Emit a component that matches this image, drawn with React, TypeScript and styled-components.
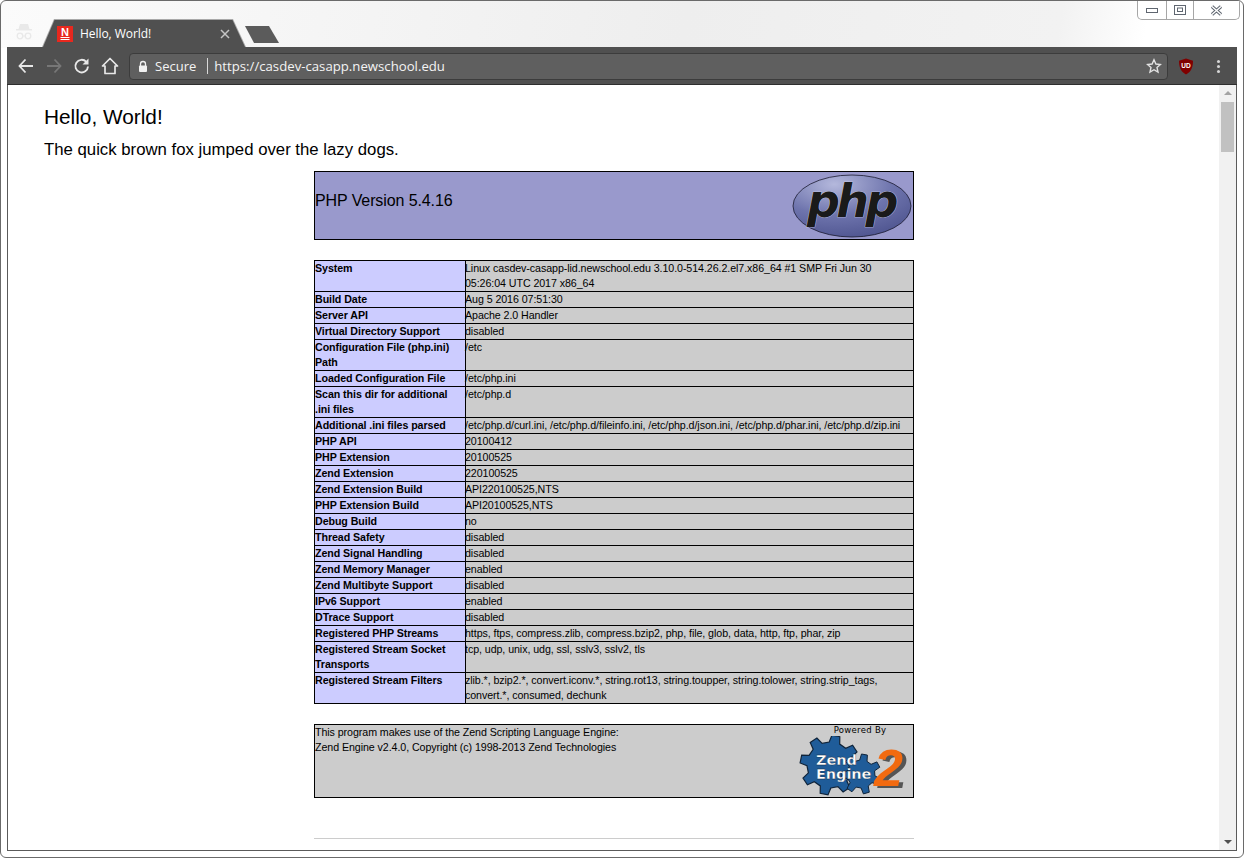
import React from 'react'
import styled, { createGlobalStyle } from 'styled-components'

const GlobalStyle = createGlobalStyle`
  html, body {
    margin: 0;
    padding: 0;
    height: 100%;
    overflow: hidden;
    background: #fff;
  }
  #root {
    height: 100%;
  }
`

const Frame = styled.div`
  box-sizing: border-box;
  width: 1244px;
  height: 858px;
  display: flex;
  flex-direction: column;
  border: 1px solid #6a6a6a;
  border-radius: 6px 6px 6px 6px;
  padding: 0 6px 6px 6px;
  background: linear-gradient(100deg, #fbfbfb 0%, #f4f4f4 30%, #eeeeee 55%, #f2f2f2 85%, #ffffff 92%);
  background-size: 100% 47px;
  background-repeat: no-repeat;
  background-color: #fff;
  overflow: hidden;
`

const TitleBar = styled.div`
  height: 46px;
  flex: none;
  display: flex;
  align-items: flex-end;
  margin-right: -3px;
`

const Incognito = styled.svg`
  width: 18px;
  height: 17px;
  margin: 0 0 7px 8px;
  flex: none;
`

const TabEdge = styled.div`
  width: 204px;
  height: 28px;
  margin-left: 9px;
  flex: none;
  background: #a9a9a9;
  clip-path: polygon(12px 0, 191px 0, 204px 28px, 0 28px);
`

const Tab = styled.div`
  height: 28px;
  box-sizing: border-box;
  display: flex;
  align-items: center;
  padding: 1px 0 0 15px;
  background: #505050;
  clip-path: polygon(12.5px 1px, 190.5px 1px, 203px 28px, 1px 28px);
  font-family: "Open Sans", "Noto Sans", sans-serif;
  font-size: 12px;
  letter-spacing: -0.05px;
  color: #fff;
`

const TabTitle = styled.span`
  margin-left: 7px;
  flex: 1;
`

const TabClose = styled.svg`
  width: 10px;
  height: 10px;
  margin-right: 16px;
`

const NewTab = styled.div`
  width: 34px;
  height: 17px;
  margin: 0 0 4px -1px;
  flex: none;
  background: #5b5b5b;
  clip-path: polygon(0 0, 24px 0, 34px 17px, 9px 17px);
`

const WindowControls = styled.div`
  align-self: flex-start;
  margin-left: auto;
  display: flex;
  height: 19px;
  box-sizing: border-box;
  border: 1px solid #a6a6a6;
  border-top: none;
  border-radius: 0 0 5px 5px;
  background: #fff;
`

const WindowButton = styled.div<{ $w: number }>`
  width: ${props => props.$w}px;
  display: flex;
  align-items: center;
  justify-content: center;
  box-sizing: border-box;
  & + & {
    border-left: 1px solid #a6a6a6;
  }
`

const Toolbar = styled.div`
  height: 38px;
  flex: none;
  display: flex;
  align-items: center;
  background: #505050;
  box-sizing: border-box;
  padding: 1px 0 0 9px;
  border-bottom: 1px solid #2e2e2e;
`

const NavIcon = styled.svg<{ $ml?: number }>`
  width: 20px;
  height: 20px;
  flex: none;
  margin-left: ${props => props.$ml ?? 0}px;
`

const Omnibox = styled.div`
  width: 1039px;
  height: 27px;
  box-sizing: border-box;
  margin-left: 9px;
  display: flex;
  align-items: center;
  background: #5f5f5f;
  border: 1px solid #3c3c3c;
  border-radius: 4px;
  padding-left: 7px;
  font-family: "Open Sans", "Noto Sans", sans-serif;
  color: #f4f4f4;
`

const Secure = styled.span`
  margin-left: 6px;
  font-size: 13px;
`

const UrlDivider = styled.span`
  width: 1px;
  height: 16px;
  margin: 0 6px 0 11px;
  background: #d8d8d8;
`

const Url = styled.span`
  font-size: 13.2px;
  flex: 1;
`

const Dots = styled.div`
  margin-left: 23px;
  display: flex;
  flex-direction: column;
  gap: 2px;
  span {
    width: 3px;
    height: 3px;
    border-radius: 50%;
    background: #d6d6d6;
  }
`

const Viewport = styled.div`
  flex: 1;
  min-height: 0;
  display: flex;
  border: 1px solid #5a5a5a;
  border-top: none;
  background: #fff;
`

const Page = styled.div`
  flex: 1;
  min-width: 0;
  overflow: hidden;
  padding: 0 36px;
  font-family: "Liberation Sans", Arial, sans-serif;
  color: #000;
`

const Heading = styled.h1`
  margin: 19px 0 0;
  font-size: 20.8px;
  font-weight: 400;
  line-height: 26px;
`

const Lead = styled.p`
  margin: 10px 0 11px;
  font-size: 16.75px;
  line-height: 20px;
`

const Center = styled.div`
  width: 600px;
  margin: 0 auto;
  position: relative;
  left: 0.5px;
`

const VersionBox = styled.div`
  box-sizing: border-box;
  height: 69px;
  display: flex;
  align-items: flex-start;
  justify-content: space-between;
  border: 1px solid #000;
  background: #9999cc;
  font-size: 16px;
  letter-spacing: -0.1px;
  line-height: 20px;
  padding: 19px 1px 0 0;
`

const PhpLogo = styled.svg`
  width: 120px;
  height: 64px;
  margin-top: -17px;
`

const InfoTable = styled.table`
  width: 600px;
  margin: 20px 0 20px;
  border-collapse: collapse;
  table-layout: fixed;
  font-size: 10.67px;
  letter-spacing: -0.07px;
  line-height: 15px;
`

const Key = styled.td`
  width: 150px;
  padding: 0;
  border: 1px solid #000;
  background: #ccccff;
  font-weight: 700;
  vertical-align: top;
`

const Value = styled.td`
  padding: 0;
  border: 1px solid #000;
  background: #cccccc;
  vertical-align: top;
`

const ValueText = styled.div`
  margin-left: -1px;
`

const ZendBox = styled.div`
  box-sizing: border-box;
  height: 74px;
  display: flex;
  justify-content: space-between;
  border: 1px solid #000;
  background: #cccccc;
  font-size: 10.67px;
  letter-spacing: -0.07px;
  line-height: 15px;
`

const ZendBrand = styled.div`
  width: 114px;
  display: flex;
  flex-direction: column;
  align-items: center;
`

const PoweredBy = styled.span`
  font-family: "DejaVu Sans", sans-serif;
  font-size: 8.5px;
  line-height: 10px;
  letter-spacing: 0.3px;
  margin-left: 8px;
`

const ZendLogo = styled.svg`
  width: 114px;
  height: 61px;
  margin-top: 1px;
`

const ZendTwo = styled.text`
  font-family: "Liberation Sans", sans-serif;
  font-style: italic;
  font-weight: 700;
  font-size: 52px;
  fill: #f26a10;
  filter: drop-shadow(4px 2px 0 #555555);
`

const ZendWord = styled.text`
  font-family: "DejaVu Sans", sans-serif;
  font-weight: 700;
  font-size: 14.5px;
  fill: #fff;
  stroke: #10243a;
  stroke-width: 0.3px;
`

const Rule = styled.div`
  height: 1px;
  margin-top: 40px;
  background: #cccccc;
`

const Scrollbar = styled.div`
  width: 17px;
  flex: none;
  display: flex;
  flex-direction: column;
  align-items: center;
  background: #f1f1f1;
`

const ScrollArrow = styled.div<{ $down?: boolean }>`
  width: 0;
  height: 0;
  flex: none;
  margin: ${props => (props.$down ? 'auto 0 6px' : '6px 0 0')};
  border-left: 4px solid transparent;
  border-right: 4px solid transparent;
  border-bottom: ${props => (props.$down ? 'none' : '4px solid #a3a3a3')};
  border-top: ${props => (props.$down ? '4px solid #505050' : 'none')};
`

const ScrollThumb = styled.div`
  width: 13px;
  height: 50px;
  margin-top: 7px;
  background: #c1c1c1;
`

const rows: [string, string][] = [
  ['System', 'Linux casdev-casapp-lid.newschool.edu 3.10.0-514.26.2.el7.x86_64 #1 SMP Fri Jun 30 05:26:04 UTC 2017 x86_64'],
  ['Build Date', 'Aug 5 2016 07:51:30'],
  ['Server API', 'Apache 2.0 Handler'],
  ['Virtual Directory Support', 'disabled'],
  ['Configuration File (php.ini) Path', '/etc'],
  ['Loaded Configuration File', '/etc/php.ini'],
  ['Scan this dir for additional .ini files', '/etc/php.d'],
  ['Additional .ini files parsed', '/etc/php.d/curl.ini, /etc/php.d/fileinfo.ini, /etc/php.d/json.ini, /etc/php.d/phar.ini, /etc/php.d/zip.ini'],
  ['PHP API', '20100412'],
  ['PHP Extension', '20100525'],
  ['Zend Extension', '220100525'],
  ['Zend Extension Build', 'API220100525,NTS'],
  ['PHP Extension Build', 'API20100525,NTS'],
  ['Debug Build', 'no'],
  ['Thread Safety', 'disabled'],
  ['Zend Signal Handling', 'disabled'],
  ['Zend Memory Manager', 'enabled'],
  ['Zend Multibyte Support', 'disabled'],
  ['IPv6 Support', 'enabled'],
  ['DTrace Support', 'disabled'],
  ['Registered PHP Streams', 'https, ftps, compress.zlib, compress.bzip2, php, file, glob, data, http, ftp, phar, zip'],
  ['Registered Stream Socket Transports', 'tcp, udp, unix, udg, ssl, sslv3, sslv2, tls'],
  ['Registered Stream Filters', 'zlib.*, bzip2.*, convert.iconv.*, string.rot13, string.toupper, string.tolower, string.strip_tags, convert.*, consumed, dechunk'],
]

// outline of a cog wheel, used twice in the Zend logo
const gear = (cx: number, cy: number, inner: number, outer: number, teeth: number, turn: number) => {
  const points: string[] = []
  const step = (Math.PI * 2) / teeth
  for (let i = 0; i < teeth; i++) {
    const a = turn + i * step
    const add = (off: number, r: number) => {
      points.push(`${(cx + Math.cos(a + off * step) * r).toFixed(1)},${(cy + Math.sin(a + off * step) * r).toFixed(1)}`)
    }
    add(-0.3, inner)
    add(-0.17, outer)
    add(0.17, outer)
    add(0.3, inner)
  }
  return points.join(' ')
}

const App = () => (
  <>
    <GlobalStyle />
    <Frame>
      <TitleBar>
        <Incognito viewBox="0 0 18 17">
          <path d="M5 1h8l1.500 5H17v1.500H1V6h2.500z" fill="#e9e9e9" />
          <circle cx="5" cy="13" r="2.800" fill="none" stroke="#e9e9e9" strokeWidth="1.300" />
          <circle cx="13" cy="13" r="2.800" fill="none" stroke="#e9e9e9" strokeWidth="1.300" />
          <path d="M7.800 13h2.400" stroke="#e9e9e9" strokeWidth="1.200" />
        </Incognito>
        <TabEdge>
          <Tab>
            <svg width="16" height="16" viewBox="0 0 16 16" style={{ flex: 'none' }}>
              <rect width="16" height="16" fill="#e8281e" />
              <text x="8" y="10" textAnchor="middle" fontFamily="Liberation Sans" fontWeight="700" fontSize="11" fill="#fff">N</text>
              <path d="M3.500 11.500h9M3.500 13.500h9" stroke="#fff" strokeWidth="1" />
            </svg>
            <TabTitle>Hello, World!</TabTitle>
            <TabClose viewBox="0 0 10 10">
              <path d="M1 1l8 8M9 1L1 9" stroke="#c4c4c4" strokeWidth="1.500" />
            </TabClose>
          </Tab>
        </TabEdge>
        <NewTab />
        <WindowControls>
          <WindowButton $w={28}>
            <svg width="12" height="6" viewBox="0 0 12 6" style={{ marginTop: 2 }}>
              <rect x="0.500" y="0.500" width="11" height="4" fill="none" stroke="#5f6670" />
            </svg>
          </WindowButton>
          <WindowButton $w={27}>
            <svg width="12" height="10" viewBox="0 0 12 10">
              <rect x="0.500" y="0.500" width="11" height="9" fill="none" stroke="#5f6670" />
              <rect x="3.500" y="3" width="5" height="3.500" fill="none" stroke="#5f6670" />
            </svg>
          </WindowButton>
          <WindowButton $w={46}>
            <svg width="13" height="11" viewBox="0 0 13 11">
              <path d="M2 1.500l9 8M11 1.500l-9 8" stroke="#5f6670" strokeWidth="3.400" />
              <path d="M2 1.500l9 8M11 1.500l-9 8" stroke="#ffffff" strokeWidth="1.400" />
            </svg>
          </WindowButton>
        </WindowControls>
      </TitleBar>

      <Toolbar>
        <NavIcon viewBox="0 0 20 20">
          <path d="M17 10H4M9.500 3.500L3.500 10l6 6.500" fill="none" stroke="#e8e8e8" strokeWidth="1.800" />
        </NavIcon>
        <NavIcon viewBox="0 0 20 20" $ml={8}>
          <path d="M3 10h13M10.500 3.500l6 6.500-6 6.500" fill="none" stroke="#777777" strokeWidth="1.800" />
        </NavIcon>
        <NavIcon viewBox="0 0 20 20" $ml={8}>
          <path d="M16 10.500a6.300 6.300 0 1 1-1.700-4.700" fill="none" stroke="#e8e8e8" strokeWidth="1.900" />
          <path d="M16.500 2.500v6h-6z" fill="#e8e8e8" />
        </NavIcon>
        <NavIcon viewBox="0 0 20 20" $ml={8}>
          <path d="M10 2.500L2.500 10H5v7.500h10V10h2.500z" fill="none" stroke="#e8e8e8" strokeWidth="1.700" strokeLinejoin="round" />
        </NavIcon>
        <Omnibox>
          <svg width="12" height="13" viewBox="0 0 12 13" style={{ flex: 'none' }}>
            <path d="M3.500 6V4a2.500 2.500 0 0 1 5 0v2" fill="none" stroke="#f0f0f0" strokeWidth="1.300" />
            <rect x="2" y="5.500" width="8" height="6.500" rx="1" fill="#f0f0f0" />
          </svg>
          <Secure>Secure</Secure>
          <UrlDivider />
          <Url>https://casdev-casapp.newschool.edu</Url>
          <svg width="16" height="16" viewBox="0 0 16 16" style={{ marginRight: 5, flex: 'none' }}>
            <path d="M8 1.800l1.900 4.200 4.500.5-3.400 3 1 4.500L8 11.700 4 14l1-4.500-3.400-3 4.500-.5z" fill="none" stroke="#e2e2e2" strokeWidth="1.400" />
          </svg>
        </Omnibox>
        <svg width="16" height="17" viewBox="0 0 16 17" style={{ marginLeft: 10, flex: 'none' }}>
          <path d="M8 0.500l7 2.300c0 6-1.500 10.700-7 13.700C2.500 13.500 1 8.800 1 2.800z" fill="#800000" />
          <text x="8" y="10" textAnchor="middle" fontFamily="Liberation Sans" fontWeight="700" fontSize="6.500" fill="#fff">UD</text>
        </svg>
        <Dots>
          <span />
          <span />
          <span />
        </Dots>
      </Toolbar>

      <Viewport>
        <Page>
          <Heading>Hello, World!</Heading>
          <Lead>The quick brown fox jumped over the lazy dogs.</Lead>
          <Center>
            <VersionBox>
              <span>PHP Version 5.4.16</span>
              <PhpLogo viewBox="0 0 120 64">
                <defs>
                  <radialGradient id="phpGlow" cx="0.35" cy="0.15" r="0.9">
                    <stop offset="0" stopColor="#b4b8dc" />
                    <stop offset="0.55" stopColor="#6e74ad" />
                    <stop offset="1" stopColor="#4f5590" />
                  </radialGradient>
                </defs>
                <ellipse cx="60" cy="32" rx="59" ry="31" fill="url(#phpGlow)" stroke="#1a1a30" strokeWidth="0.800" />
                <text
                  x="59"
                  y="43"
                  textAnchor="middle"
                  fontFamily="DejaVu Sans"
                  fontStyle="italic"
                  fontWeight="700"
                  fontSize="46"
                  letterSpacing="-3.500"
                  fill="#1a1a1a"
                  stroke="#d8daf0"
                  strokeWidth="0.700"
                  paintOrder="stroke"
                >
                  php
                </text>
              </PhpLogo>
            </VersionBox>

            <InfoTable>
              <tbody>
                {rows.map(([key, value]) => (
                  <tr key={key}>
                    <Key>{key}</Key>
                    <Value>
                      <ValueText>{value}</ValueText>
                    </Value>
                  </tr>
                ))}
              </tbody>
            </InfoTable>

            <ZendBox>
              <div>
                This program makes use of the Zend Scripting Language Engine:
                <br />
                Zend Engine v2.4.0, Copyright (c) 1998-2013 Zend Technologies
              </div>
              <ZendBrand>
                <PoweredBy>Powered By</PoweredBy>
                <ZendLogo viewBox="0 0 114 61">
                  <polygon points={gear(31, 29, 23, 30, 8, 0.2)} fill="#1f5c99" stroke="#10243a" strokeWidth="1.200" />
                  <polygon points={gear(62, 38, 14, 20, 7, 0.4)} fill="#1f5c99" stroke="#10243a" strokeWidth="1" />
                  <ZendTwo x="75" y="50">2</ZendTwo>
                  <ZendWord x="17" y="29">Zend</ZendWord>
                  <ZendWord x="17" y="43">Engine</ZendWord>
                </ZendLogo>
              </ZendBrand>
            </ZendBox>
            <Rule />
          </Center>
        </Page>
        <Scrollbar>
          <ScrollArrow />
          <ScrollThumb />
          <ScrollArrow $down />
        </Scrollbar>
      </Viewport>
    </Frame>
  </>
)

export default App
